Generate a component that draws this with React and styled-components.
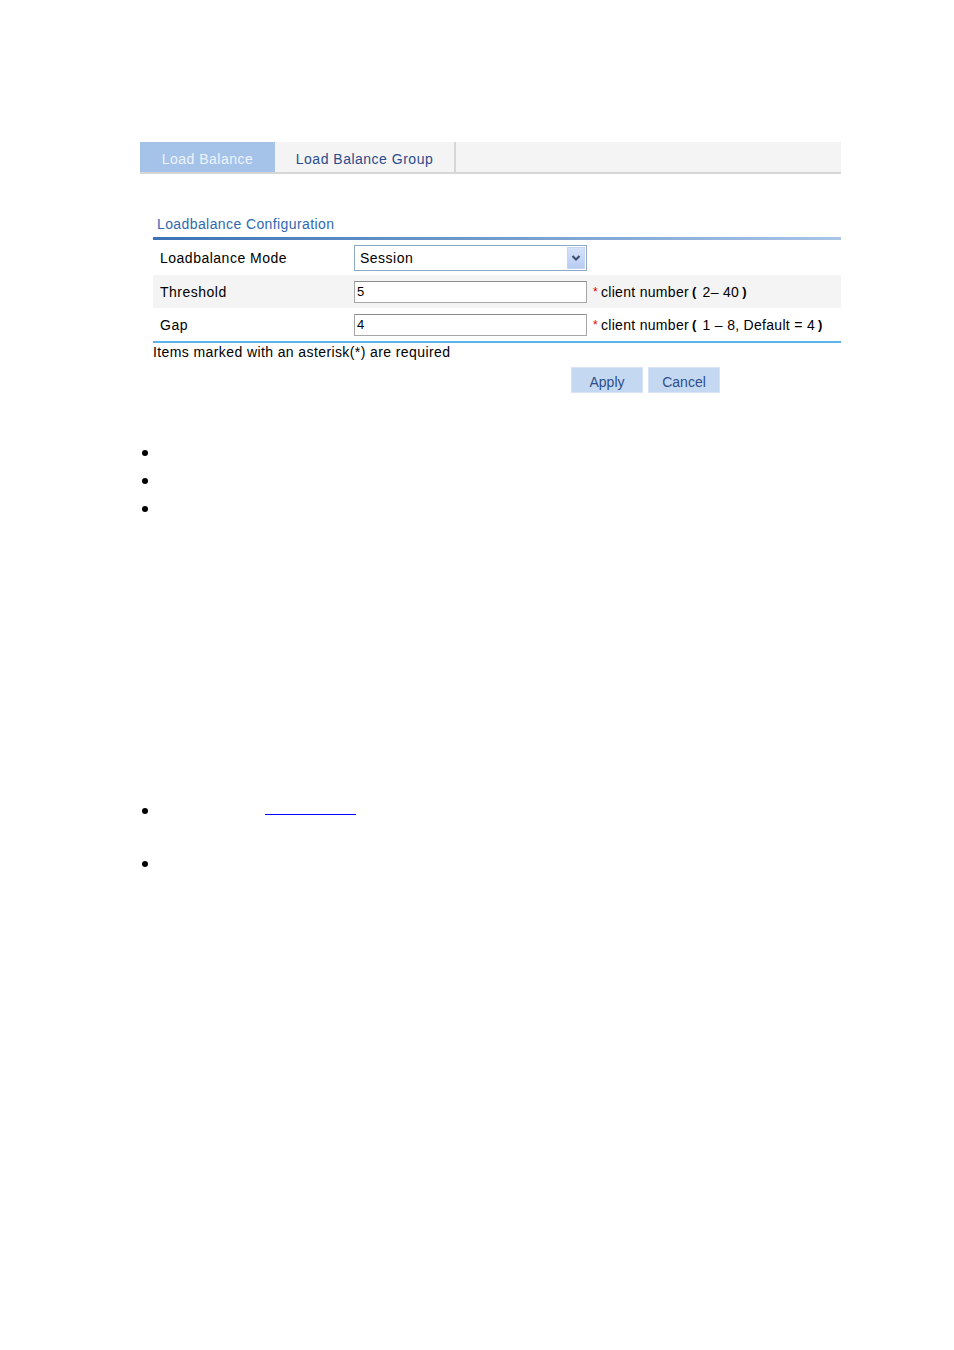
import React from "react";
import styled, { createGlobalStyle } from "styled-components";

const Global = createGlobalStyle`
  html, body { margin: 0; padding: 0; background: #fff; }
  body { font-family: "Liberation Sans", Arial, sans-serif; color: #000; }
`;

const Page = styled.div`
  width: 954px;
  min-height: 1350px;
  box-sizing: border-box;
  padding: 142px 113px 0 140px;
`;

const TabBar = styled.div`
  display: flex;
  height: 30px;
  background: #f4f4f4;
  border-bottom: 2px solid #d6d6d6;
`;

const Tab = styled.div`
  display: flex;
  align-items: center;
  justify-content: center;
  width: ${(p) => p.$w}px;
  padding-top: 3px;
  box-sizing: border-box;
  font-size: 14px;
  letter-spacing: 0.5px;
  background: ${(p) => (p.$active ? "#a5c3e9" : "transparent")};
  color: ${(p) => (p.$active ? "#eef3fb" : "#2b4c8c")};
  border-right: ${(p) => (p.$divider ? "2px solid #d6d6d6" : "none")};
`;

const Section = styled.div`
  margin-left: 13px;
  margin-top: 41px;
`;

const Title = styled.div`
  font-size: 14px;
  letter-spacing: 0.4px;
  color: #2f68b2;
  padding-left: 4px;
  height: 22px;
  line-height: 18px;
`;

const TitleRule = styled.div`
  height: 3px;
  background: linear-gradient(to right, #3b73b6, #a9c5e7);
`;

const Table = styled.div`
  border-bottom: 2px solid #5cb5ea;
`;

const Row = styled.div`
  display: flex;
  align-items: center;
  height: ${(p) => p.$h}px;
  background: ${(p) => (p.$alt ? "#f4f4f4" : "#fff")};
`;

const Label = styled.div`
  width: 201px;
  padding-left: 7px;
  box-sizing: border-box;
  font-size: 14px;
  letter-spacing: 0.5px;
`;

const SelectBox = styled.div`
  position: relative;
  width: 233px;
  height: 26px;
  box-sizing: border-box;
  border: 1px solid #8fa8c8;
  background: #fff;
  display: flex;
  align-items: center;
  padding-left: 5px;
  font-size: 14px;
  letter-spacing: 0.5px;
`;

const Arrow = styled.div`
  position: absolute;
  right: 1px;
  top: 1px;
  width: 18px;
  height: 22px;
  background: linear-gradient(#d6e2fa, #b7cbf2);
  border: 1px solid #c5d5f0;
  box-sizing: border-box;
  display: flex;
  align-items: center;
  justify-content: center;
`;

const Input = styled.div`
  width: 233px;
  height: 22px;
  box-sizing: border-box;
  border: 1px solid #a7a7a7;
  border-top-color: #8c8c8c;
  background: #fff;
  display: flex;
  align-items: center;
  padding-left: 2px;
  font-size: 13px;
`;

const Hint = styled.div`
  display: flex;
  align-items: center;
  margin-left: 6px;
  font-size: 14px;
  letter-spacing: 0.3px;
  white-space: nowrap;
`;

const Star = styled.span`
  color: #e00000;
  margin-right: 3px;
  font-size: 12px;
`;

const Bracket = styled.span`
  font-weight: 700;
  font-size: 13px;
  margin: 0 ${(p) => p.$r || 0}px 0 ${(p) => p.$l || 0}px;
`;

const Note = styled.div`
  font-size: 14px;
  letter-spacing: 0.4px;
  height: 18px;
  line-height: 19px;
`;

const Buttons = styled.div`
  display: flex;
  gap: 5px;
  padding-left: 418px;
  margin-top: 6px;
`;

const Button = styled.div`
  width: 72px;
  height: 26px;
  background: #c5d8f1;
  border: 1px solid #d8e4f5;
  box-sizing: border-box;
  color: #2d4f8a;
  font-size: 14px;
  display: flex;
  align-items: center;
  justify-content: center;
  padding-top: 3px;
`;

const List = styled.ul`
  list-style: none;
  margin: 57px 0 0;
  padding: 0;
`;

const Item = styled.li`
  position: relative;
  height: ${(p) => p.$h}px;
  margin-top: ${(p) => p.$mt || 0}px;
  &::before {
    content: "";
    position: absolute;
    left: 2px;
    top: 0;
    width: 6px;
    height: 6px;
    border-radius: 50%;
    background: #000;
  }
`;

const LinkLine = styled.span`
  position: absolute;
  left: 125px;
  top: 6px;
  width: 91px;
  border-bottom: 1px solid #0000ff;
`;

export default function App() {
  return (
    <>
      <Global />
      <Page>
        <TabBar>
          <Tab $w={135} $active>Load Balance</Tab>
          <Tab $w={181} $divider>Load Balance Group</Tab>
        </TabBar>
        <Section>
          <Title>Loadbalance Configuration</Title>
          <TitleRule />
          <Table>
            <Row $h={35}>
              <Label>Loadbalance Mode</Label>
              <SelectBox>
                Session
                <Arrow>
                  <svg width="10" height="8" viewBox="0 0 10 8">
                    <path d="M1.5 2 L5 5.5 L8.5 2" fill="none" stroke="#3a4a6a" strokeWidth="2" />
                  </svg>
                </Arrow>
              </SelectBox>
            </Row>
            <Row $h={33} $alt>
              <Label>Threshold</Label>
              <Input>5</Input>
              <Hint>
                <Star>*</Star>client number<Bracket $l={3} $r={6}>(</Bracket>2– 40<Bracket $l={3}>)</Bracket>
              </Hint>
            </Row>
            <Row $h={33}>
              <Label>Gap</Label>
              <Input>4</Input>
              <Hint>
                <Star>*</Star>client number<Bracket $l={3} $r={6}>(</Bracket>1 – 8, Default = 4<Bracket $l={3}>)</Bracket>
              </Hint>
            </Row>
          </Table>
          <Note>Items marked with an asterisk(*) are required</Note>
          <Buttons>
            <Button>Apply</Button>
            <Button>Cancel</Button>
          </Buttons>
        </Section>
        <List>
          <Item $h={28} />
          <Item $h={28} />
          <Item $h={28} />
          <Item $h={53} $mt={274}>
            <LinkLine />
          </Item>
          <Item $h={28} />
        </List>
      </Page>
    </>
  );
}
